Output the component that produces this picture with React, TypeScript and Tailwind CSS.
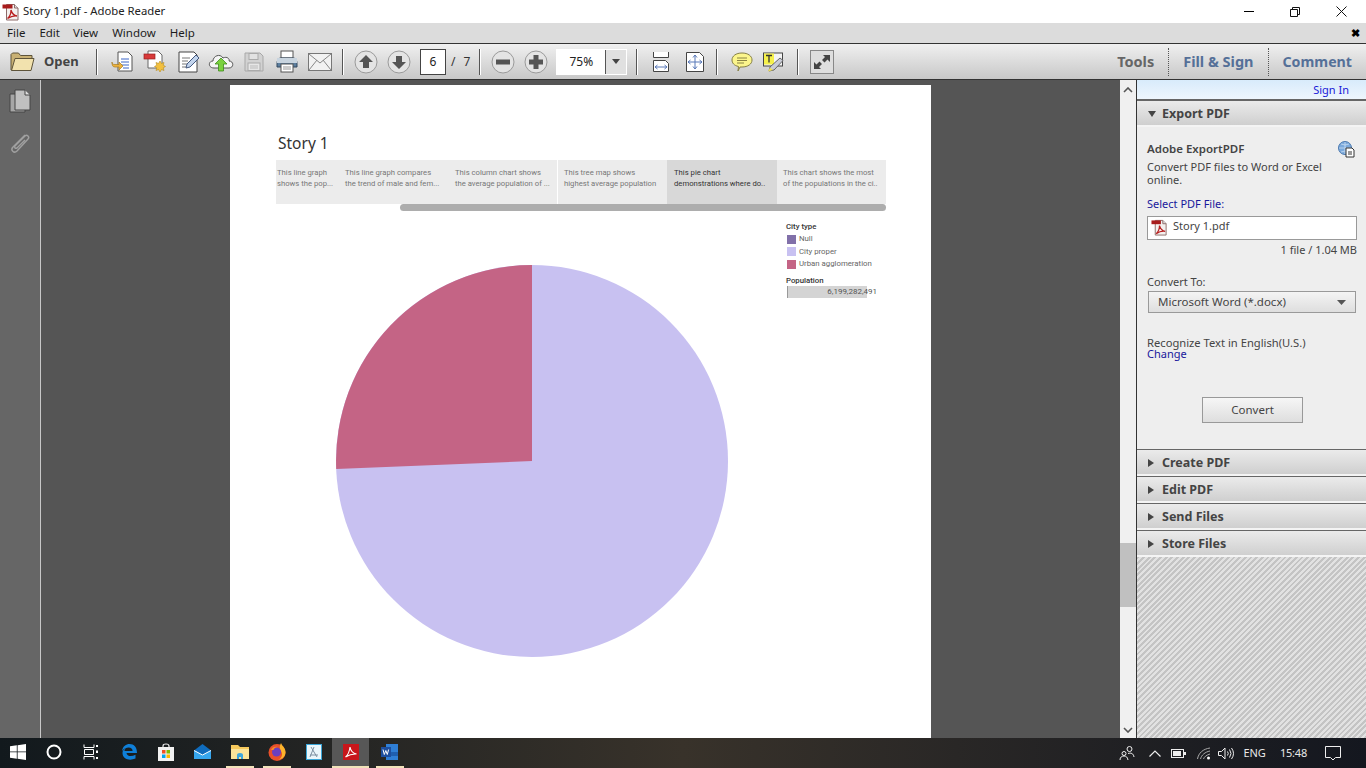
import React from "react";

const ui = "font-['Noto_Sans','Open_Sans',sans-serif]";

function PdfIcon({ size = 18 }: { size?: number }) {
  return (
    <svg width={size} height={size} viewBox="0 0 18 18">
      <path d="M4.5 1.5h8l3.5 3.500v12h-11.500z" fill="#f4f0ee" stroke="#8c6a68" />
      <path d="M12.500 1.500v3.500h3.500" fill="#ddd" stroke="#8c6a68" />
      <rect x="0.500" y="1.500" width="10" height="4" fill="#a81c1c" />
      <path d="M5.500 15.500c2.500-2 3.500-5 3.500-8.500 1 3.500 3 5.500 6 6-3-.5-6.500 .5-9.500 2.500z" fill="none" stroke="#b92020" strokeWidth="1.300" />
    </svg>
  );
}

function Folder() {
  return (
    <svg width="25" height="21" viewBox="0 0 25 21">
      <path d="M1 19V3.500L2.500 2h6l2 2.500H22V8H6L3.500 19z" fill="#c9b174" stroke="#5e543a" />
      <path d="M1.500 19.500 5 7.500h19L21 19.500z" fill="#f2e2ae" stroke="#5e543a" />
    </svg>
  );
}

function TbIcon({ children }: { children: React.ReactNode }) {
  return <div className="w-[33px] h-[35px] flex items-center justify-center shrink-0">{children}</div>;
}

function Sep({ className = "" }: { className?: string }) {
  return <div className={`w-[1px] h-[26px] bg-[#555] border-r border-white box-content shrink-0 ${className}`} />;
}

function RoundBtn({ d }: { d: string }) {
  return (
    <TbIcon>
      <svg width="24" height="24" viewBox="0 0 24 24">
        <circle cx="12" cy="12" r="11" fill="#e4e4e4" stroke="#9a9a9a" />
        <path d={d} fill="#555" />
      </svg>
    </TbIcon>
  );
}

function SectionHeader({ label, open = false }: { label: string; open?: boolean }) {
  return (
    <div className="h-[27px] pt-[2px] border-t border-[#666] border-b-2 border-b-[#f4f4f4] bg-gradient-to-b from-[#ebebeb] to-[#cfcfcf] flex items-center text-[12.5px] font-bold text-[#444] shrink-0">
      <svg width="10" height="10" viewBox="0 0 10 10" className={open ? "ml-[10px]" : "ml-[9px]"}>
        {open ? <path d="M1 2h8L5 8z" fill="#444" /> : <path d="M2 1v8l6-4z" fill="#444" />}
      </svg>
      <span className={open ? "ml-[5px]" : "ml-[6px]"}>{label}</span>
    </div>
  );
}

function PdfTab({ a, b, w, active = false, divider = false, pl = "pl-[7px]" }: { a: string; b: string; w: string; active?: boolean; divider?: boolean; pl?: string }) {
  return (
    <div className={`${w} h-[44px] ${pl} pt-[7px] leading-[11px] text-[7.7px] shrink-0 whitespace-nowrap overflow-hidden ${active ? "bg-[#d8d8d8] text-[#333]" : "bg-[#ececec] text-[#777]"} ${divider ? "border-r border-white" : ""}`}>
      <div>{a}</div>
      <div>{b}</div>
    </div>
  );
}

function LegendRow({ color, label }: { color: string; label: string }) {
  return (
    <div className="flex items-center h-[12.500px] ml-[1px]">
      <div className={`w-[9px] h-[9px] ${color}`} />
      <span className="ml-[3px] text-[7.8px] text-[#666]">{label}</span>
    </div>
  );
}

function TaskIcon({ children, active = false, mark = false, w = "w-[37px]" }: { children: React.ReactNode; active?: boolean; mark?: boolean; w?: string }) {
  return (
    <div className={`${w} h-[30px] flex flex-col items-center shrink-0 ${active ? "bg-[#575757]" : ""}`}>
      <div className="flex-1 flex items-center justify-center">{children}</div>
      <div className={`h-[2px] ${active ? "w-full" : "w-[28px]"} ${mark ? "bg-[#f1e3ba]" : ""}`} />
    </div>
  );
}

export default function App() {
  return (
    <div className={`w-[1366px] h-[768px] flex flex-col overflow-hidden bg-white ${ui}`}>
      {/* title bar */}
      <div className="h-[23px] flex items-center shrink-0 text-[11.3px] text-[#222]">
        <div className="ml-[2px] mt-[1px]"><PdfIcon /></div>
        <span className="ml-[3px]">Story 1.pdf - Adobe Reader</span>
        <div className="ml-auto flex items-center">
          <div className="w-[10px] h-[1px] bg-black mr-[36px]" />
          <svg width="10" height="10" viewBox="0 0 10 10" className="mr-[36px]">
            <path d="M.5 2.500h7v7h-7zM2.500 2.500v-2h7v7h-2" fill="none" stroke="#111" />
          </svg>
          <svg width="11" height="11" viewBox="0 0 11 11" className="mr-[19px]">
            <path d="M.5 .5l10 10M10.500 .5l-10 10" stroke="#111" />
          </svg>
        </div>
      </div>
      {/* menu */}
      <div className="h-[20px] bg-[#dcdcdc] flex items-center text-[11.5px] text-[#1c1c1c] shrink-0 relative">
        <span className="ml-[7px]">File</span>
        <span className="ml-[14px]">Edit</span>
        <span className="ml-[13px]">View</span>
        <span className="ml-[14px]">Window</span>
        <span className="ml-[14px]">Help</span>
        <span className="ml-auto mr-[6px] mb-[1px] text-[11px] font-bold text-black leading-none">✖</span>
      </div>
      {/* toolbar */}
      <div className="h-[37px] border-y border-[#333] bg-gradient-to-b from-[#f0f0f0] to-[#c8c8c8] flex items-center shrink-0 border-x-0">
        <div className="ml-[10px]"><Folder /></div>
        <span className="ml-[9px] text-[13px] font-bold text-[#444] w-[45px]">Open</span>
        <Sep className="ml-[7px]" />
        <div className="ml-[7px] flex">
          <TbIcon>
            <svg width="24" height="24" viewBox="0 0 24 24">
              <path d="M8 2h10l4 4v15H8z" fill="#fff" stroke="#555" />
              <path d="M11 9h8M11 12h8M11 15h8M13 18h6" stroke="#3c66c8" />
              <path d="M9 17H5c-2.500 0-3-2-3-5 0 2 1 2.500 3 2.500h4v-2.500l4 4-4 4z" fill="#eeb23c" stroke="#a87c20" strokeWidth=".7" />
            </svg>
          </TbIcon>
          <TbIcon>
            <svg width="24" height="24" viewBox="0 0 24 24">
              <path d="M5 1h10l4 4v13H5z" fill="#fff" stroke="#666" />
              <rect x="1" y="4" width="11" height="5" fill="#d83a3a" stroke="#922" strokeWidth=".7" />
              <path d="M17 11l1.500 2.500 2.500-1-.8 2.700 2.300 1.300-2.300 1.300.8 2.700-2.500-1L17 22l-1.500-2.500-2.500 1 .8-2.700-2.300-1.300 2.300-1.300-.8-2.700 2.500 1z" fill="#f3c03e" stroke="#b68a1c" strokeWidth=".6" />
            </svg>
          </TbIcon>
          <TbIcon>
            <svg width="24" height="24" viewBox="0 0 24 24">
              <path d="M3 2h15l3 3v17H3z" fill="#fff" stroke="#444" />
              <path d="M6 8h8M6 11h6M6 14h5M6 17h4" stroke="#777" />
              <path d="M10 18l1-4 9-9 3 3-9 9z" fill="#c3d5ee" stroke="#44597f" />
            </svg>
          </TbIcon>
          <TbIcon>
            <svg width="26" height="22" viewBox="0 0 26 22">
              <path d="M6 17c-6 0-6-7-1-7 0-5 7-8 10-3 4-2 7 1 6 3 5 0 5 7 0 7z" fill="#f5f5f5" stroke="#555" />
              <path d="M13 7l6 6h-3.500v7h-5v-7H7z" fill="#7ad13e" stroke="#3f8c1d" strokeWidth=".8" />
            </svg>
          </TbIcon>
          <TbIcon>
            <svg width="20" height="20" viewBox="0 0 20 20">
              <path d="M1 1h15l3 3v15H1z" fill="#d2d2d2" stroke="#a8a8a8" />
              <rect x="5" y="1.500" width="9" height="6" fill="#e2e2e2" stroke="#aaa" />
              <rect x="4" y="11" width="12" height="7.500" fill="#e6e6e6" stroke="#aaa" />
              <path d="M6 14h8M6 16h8" stroke="#bbb" />
            </svg>
          </TbIcon>
          <TbIcon>
            <svg width="24" height="23" viewBox="0 0 24 23">
              <rect x="6" y="1" width="12" height="7" fill="#fff" stroke="#555" />
              <path d="M2 14q0-6 4-6h12q4 0 4 6v3H2z" fill="#5d7f9f" stroke="#33485f" />
              <rect x="2" y="8" width="20" height="5" fill="#c8d4df" />
              <rect x="6" y="14" width="12" height="8" fill="#fff" stroke="#555" />
              <path d="M8 17h8M8 19h8" stroke="#999" />
            </svg>
          </TbIcon>
          <TbIcon>
            <svg width="24" height="18" viewBox="0 0 24 18">
              <rect x=".5" y=".5" width="23" height="17" fill="#f2f2f2" stroke="#777" />
              <path d="M1 1l11 9 11-9M1 17l8-10M23 17l-8-10" fill="none" stroke="#888" />
            </svg>
          </TbIcon>
        </div>
        <Sep className="ml-[6px]" />
        <div className="ml-[5px] flex">
          <RoundBtn d="M12 5l7 7h-4v6H9v-6H5z" />
          <RoundBtn d="M12 19l7-7h-4V6H9v6H5z" />
        </div>
        <div className="ml-[5px] w-[26px] h-[26px] bg-white border border-[#444] flex items-center justify-center text-[12px] text-[#222]">6</div>
        <span className="ml-[5px] text-[12px] text-[#333]">/</span>
        <span className="ml-[8px] text-[12px] text-[#333]">7</span>
        <Sep className="ml-[9px]" />
        <div className="ml-[5px] flex">
          <RoundBtn d="M5 9.500h14v5H5z" />
          <RoundBtn d="M9.500 5h5v4.500H19v5h-4.500V19h-5v-4.500H5v-5h4.500z" />
        </div>
        <div className="ml-[4px] w-[71px] h-[26px] border border-white bg-white flex text-[12px] text-[#222]">
          <div className="w-[48px] flex items-center justify-center">75%</div>
          <div className="flex-1 border-l border-[#555] bg-[#e0e0e0] flex items-center justify-center">
            <svg width="8" height="5" viewBox="0 0 8 5"><path d="M0 0h8L4 5z" fill="#444" /></svg>
          </div>
        </div>
        <Sep className="ml-[9px]" />
        <div className="ml-[7px] flex">
          <TbIcon>
            <svg width="18" height="20" viewBox="0 0 18 20">
              <path d="M.5 0v5.500h15V0" fill="#fff" stroke="#444" />
              <path d="M.5 8.500h12l3 3v8H.5z" fill="#fff" stroke="#444" />
              <path d="M2 15h12M2 15l2.500-2M2 15l2.500 2M14 15l-2.500-2M14 15l-2.500 2" stroke="#5878b8" fill="none" />
            </svg>
          </TbIcon>
          <TbIcon>
            <svg width="18" height="20" viewBox="0 0 18 20">
              <path d="M.5 .5h13l4 4v15H.5z" fill="#fff" stroke="#444" />
              <path d="M9 3v14M2 10h14M9 3L7 5.500M9 3l2 2.500M9 17l-2-2.500M9 17l2-2.500M2 10l2.500-2M2 10l2.500 2M16 10l-2.500-2M16 10l-2.500 2" stroke="#5878b8" fill="none" />
            </svg>
          </TbIcon>
        </div>
        <Sep className="ml-[5px]" />
        <div className="ml-[7px] flex">
          <TbIcon>
            <svg width="22" height="20" viewBox="0 0 22 20">
              <path d="M11 1c6 0 10 3 10 7s-4 7-10 7H9l-2 4 .5-4.500C3 13.500 1 11 1 8c0-4 4-7 10-7z" fill="#fbf58c" stroke="#857f44" />
              <path d="M6 6h10M6 8.500h10M6 11h7" stroke="#8a8444" />
            </svg>
          </TbIcon>
          <div className="ml-[-1px]">
            <TbIcon>
              <svg width="22" height="20" viewBox="0 0 22 20">
                <rect x=".5" y="1" width="19" height="13" fill="#f4f4f4" stroke="#444" />
                <rect x="1" y="1.500" width="10" height="11" fill="#f5f04a" />
                <path d="M3 3.500h6M6 3.500v7" stroke="#333" strokeWidth="1.300" />
                <path d="M6 19l1-4 10-9 3 2.500L11 18z" fill="#c9ccd6" stroke="#666" />
                <path d="M5 19.500l2-4 3 2.500z" fill="#f0e05a" />
              </svg>
            </TbIcon>
          </div>
        </div>
        <Sep className="ml-[7px]" />
        <div className="ml-[11px] w-[24px] h-[24px] border border-[#888] bg-[#dedede] flex items-center justify-center">
          <svg width="20" height="20" viewBox="0 0 20 20">
            <path d="M11 3h7v7l-2.500-2.500-3 3-2.500-2.500 3-3zM9 17H2v-7l2.500 2.500 3-3L10 12l-3 3z" fill="#444" />
          </svg>
        </div>
        <div className="ml-auto flex items-center h-full text-[14.5px] font-bold">
          <span className="text-[#666]">Tools</span>
          <div className="ml-[14px] h-[28px] border-l border-dotted border-[#555]" />
          <span className="ml-[14px] text-[#557098]">Fill &amp; Sign</span>
          <div className="ml-[14px] h-[28px] border-l border-dotted border-[#555]" />
          <span className="ml-[14px] mr-[14px] text-[14.2px] text-[#557098]">Comment</span>
        </div>
      </div>

      {/* body */}
      <div className="flex-1 flex min-h-0 bg-[#555]">
        <div className="w-[40px] bg-[#666] border-r-0 shrink-0 flex flex-col items-center pt-[9px]">
          <svg width="22" height="25" viewBox="0 0 22 25">
            <path d="M1 5h15v18H1z" fill="#a6a6a6" stroke="#444" />
            <path d="M6 1h10l5 5v15H6z" fill="#c0c0c0" stroke="#444" />
            <path d="M16 1v5h5" fill="#e0e0e0" stroke="#444" />
          </svg>
          <svg width="22" height="24" viewBox="0 0 22 24" className="mt-[18px]">
            <path d="M16 3 4 15c-3 3 1 7 4 4L19 7c2-2-1-5-3-3L6 14c-1 1 0 3 2 2l8-8" fill="none" stroke="#a0a0a0" strokeWidth="1.400" />
          </svg>
        </div>
        <div className="w-[1px] bg-[#c8c8c8] shrink-0" />
        <div className="flex-1 overflow-hidden pl-[189px] pt-[5px]">
          {/* pdf page */}
          <div className="w-[701px] h-[700px] bg-white pl-[46px] pt-[47px]">
            <div className="text-[15.5px] text-[#333] leading-[22px] ml-[2px]">Story 1</div>
            <div className="flex mt-[6px] w-[610px] font-['Roboto',sans-serif]">
              <PdfTab a="This  line graph" b="shows the pop..." w="w-[62px]" pl="pl-[1px]" />
              <PdfTab a="This line graph compares" b="the trend of male and fem..." w="w-[110px]" />
              <PdfTab a="This column chart shows" b="the average population of ..." w="w-[110px]" divider />
              <PdfTab a="This tree map shows" b="highest average population" w="w-[109px]" pl="pl-[6px]" />
              <PdfTab a="This pie chart" b="demonstrations where do.." w="w-[110px]" active />
              <PdfTab a="This chart shows the most" b="of the populations in the ci.." w="w-[109px]" pl="pl-[6px]" />
            </div>
            <div className="h-[7px] w-[610px] pl-[124px]">
              <div className="h-full bg-[#adadad] rounded-full" />
            </div>
            <div className="flex">
              <svg width="392" height="392" viewBox="0 0 392 392" className="ml-[60px] mt-[54px] shrink-0">
                <circle cx="196" cy="196" r="196" fill="#c8c1f1" />
                <path d="M196 196 L.2 204 A196 196 0 0 1 196 0z" fill="#c46485" />
              </svg>
              <div className="ml-[58px] mt-[11px] font-['Roboto',sans-serif]">
                <div className="text-[7.8px] font-medium text-[#333] leading-[10px] mb-[1px]">City type</div>
                <LegendRow color="bg-[#8170a9]" label="Null" />
                <LegendRow color="bg-[#c8c1f1]" label="City proper" />
                <LegendRow color="bg-[#c46485]" label="Urban agglomeration" />
                <div className="text-[7.8px] font-medium text-[#333] leading-[11px] mt-[4px]">Population</div>
                <div className="w-[80px] ml-[1px] h-[12px] bg-[#d4d4d4] border-l border-[#999] text-[8px] text-[#555] leading-[12px] text-right whitespace-nowrap">
                  <span className="mr-[-10px]">6,199,282,491</span>
                </div>
              </div>
            </div>
          </div>
        </div>
        {/* scrollbar */}
        <div className="w-[16px] bg-[#f0f0f0] flex flex-col items-center shrink-0">
          <svg width="10" height="6" viewBox="0 0 10 6" className="mt-[7px]"><path d="M1 5l4-4 4 4" fill="none" stroke="#555" strokeWidth="1.600" /></svg>
          <div className="w-full h-[64px] bg-[#c0c0c0] mt-[450px]" />
          <svg width="10" height="6" viewBox="0 0 10 6" className="mt-auto mb-[5px]"><path d="M1 1l4 4 4-4" fill="none" stroke="#555" strokeWidth="1.600" /></svg>
        </div>
        {/* right panel */}
        <div className="w-[230px] shrink-0 border-l border-[#333] bg-[#eeeeee] flex flex-col text-[11px] text-[#444]">
          <div className="h-[20px] bg-gradient-to-b from-[#d8ebfb] to-[#eef6fd] border-b border-[#666] text-right pr-[17px] text-[11px] leading-[19px] text-[#1818d8] shrink-0">Sign In</div>
          <div className="h-[28px] flex flex-col shrink-0">
            <SectionHeader label="Export PDF" open />
          </div>
          <div className="h-[321px] pl-[10px] pr-[9px] pt-[13px] shrink-0 relative">
            <div className="text-[11.5px] font-semibold leading-[16px] text-[#444]">Adobe ExportPDF</div>
            <svg width="17" height="17" viewBox="0 0 17 17" className="absolute right-[11px] top-[13px]">
              <circle cx="7" cy="7" r="6.500" fill="#7ba9dc" stroke="#4a78ae" />
              <path d="M1 7h12M7 1v12M3 3q4 2 8 0M3 11q4-2 8 0" stroke="#d3e4f5" fill="none" strokeWidth=".7" />
              <path d="M8 7h6l2 2v7H8z" fill="#fff" stroke="#333" />
              <path d="M10 11h4M10 13h4" stroke="#333" />
            </svg>
            <div className="mt-[3px] leading-[13px]">Convert PDF files to Word or Excel<br />online.</div>
            <div className="mt-[10px] leading-[16px] text-[#18189c]">Select PDF File:</div>
            <div className="mt-[4px] h-[24px] bg-white border border-[#999] flex items-start">
              <div className="ml-[3px] mt-[2px]"><PdfIcon size={17} /></div>
              <span className="ml-[5px] leading-[17px]">Story 1.pdf</span>
            </div>
            <div className="mt-[2px] text-right leading-[15px]">1 file / 1.04 MB</div>
            <div className="mt-[17px] leading-[16px]">Convert To:</div>
            <div className="mt-[1px] w-[208px] ml-[1px] h-[22px] border border-[#999] bg-gradient-to-b from-[#f4f4f4] to-[#dedede] flex items-center pl-[9px] pr-[9px] text-[11.5px]">
              <span>Microsoft Word (*.docx)</span>
              <svg width="9" height="5" viewBox="0 0 9 5" className="ml-auto"><path d="M0 0h9L4.500 5z" fill="#555" /></svg>
            </div>
            <div className="mt-[24px] leading-[11px] text-[11.2px]">Recognize Text in English(U.S.)</div>
            <div className="leading-[11px] text-[#18189c]">Change</div>
            <div className="mt-[38px] ml-[55px] w-[101px] h-[26px] border border-[#999] bg-gradient-to-b from-[#f6f6f6] to-[#dedede] flex items-center justify-center text-[11.5px]">Convert</div>
          </div>
          <SectionHeader label="Create PDF" />
          <SectionHeader label="Edit PDF" />
          <SectionHeader label="Send Files" />
          <SectionHeader label="Store Files" />
          <div className="flex-1 bg-[repeating-linear-gradient(135deg,#c4c4c4_0,#c4c4c4_2px,#e2e2e2_2px,#e2e2e2_4px)]" />
        </div>
      </div>

      {/* taskbar */}
      <div className="h-[30px] shrink-0 flex items-center bg-gradient-to-r from-[#12191d] via-[#38322a] to-[#14171f]">
        <TaskIcon w="w-[36px]">
          <svg width="16" height="16" viewBox="0 0 16 16"><path d="M0 2.300l6.800-1V7.500H0zM7.600 1.200 16 0v7.500H7.600zM0 8.300h6.800v6.400l-6.800-1zM7.600 8.300H16V16l-8.400-1.200z" fill="#fff" /></svg>
        </TaskIcon>
        <TaskIcon w="w-[36px]">
          <svg width="16" height="16" viewBox="0 0 16 16"><circle cx="8" cy="8" r="6.500" fill="none" stroke="#fff" strokeWidth="2" /></svg>
        </TaskIcon>
        <TaskIcon w="w-[38px]">
          <svg width="16" height="16" viewBox="0 0 16 16"><path d="M1 .5v3h10v-3M1 15.500v-3h10v3M1.500 5.500h9v5h-9z" fill="none" stroke="#fff" /><path d="M14 1v2M14 6.500v2.500M14 13v2" stroke="#fff" strokeWidth="2" /></svg>
        </TaskIcon>
        <TaskIcon>
          <svg width="16" height="16" viewBox="0 0 16 16"><path d="M1 7C2 2 5 0 8.500 0 13 0 16 3 16 9H5.500c.3 3.500 5 4 9 1.800v3.700C9 17 1.500 15.500 1.500 9c0-2 1-3.500 3.500-5-1 1-1.500 2-1.600 3h8.200c0-4-6-5-10.600 0z" fill="#0f7fd8" /></svg>
        </TaskIcon>
        <TaskIcon>
          <svg width="16" height="18" viewBox="0 0 16 18">
            <path d="M5 5V3q0-2 3-2t3 2v2" fill="none" stroke="#eee" strokeWidth="1.200" />
            <rect y="4" width="16" height="14" fill="#f2f2f2" />
            <rect x="4" y="7" width="3.500" height="3.500" fill="#f25022" /><rect x="8.500" y="7" width="3.500" height="3.500" fill="#7fba00" />
            <rect x="4" y="11.500" width="3.500" height="3.500" fill="#00a4ef" /><rect x="8.500" y="11.500" width="3.500" height="3.500" fill="#ffb900" />
          </svg>
        </TaskIcon>
        <TaskIcon>
          <svg width="17" height="17" viewBox="0 0 17 17"><path d="M0 6.500 8.500 0 17 6.500V15H0z" fill="#0f6cbd" /><path d="M0 6.500 8.500 11 17 6.500V15H0z" fill="#36a6ee" /><path d="M0 6.500 8.500 11 17 6.500" fill="none" stroke="#fff" /></svg>
        </TaskIcon>
        <TaskIcon mark>
          <svg width="18" height="16" viewBox="0 0 18 16"><path d="M0 1h7l2 2h9v12H0z" fill="#f6c95c" /><rect y="5" width="18" height="10" fill="#fbe49a" /><path d="M6 15v-4q0-2 3-2t3 2v4h-2v-2H8v2z" fill="#3fa7dc" /></svg>
        </TaskIcon>
        <TaskIcon mark>
          <svg width="18" height="18" viewBox="0 0 18 18">
            <circle cx="9" cy="9.500" r="8.500" fill="#e8502a" />
            <path d="M13 0c1 3 5 5 4.500 10C17 14 14 16 10 17c4-2 5-6 3-9-1-2-2-4 0-8z" fill="#fcb42c" />
            <circle cx="8.500" cy="9" r="4.500" fill="#6a3fc0" />
            <path d="M3 7c1-3 4-4 7-3-2 0-4 1-4.500 3z" fill="#f98a2a" />
          </svg>
        </TaskIcon>
        <TaskIcon>
          <svg width="16" height="16" viewBox="0 0 16 16"><rect x=".5" y=".5" width="15" height="15" fill="#eaf6fb" stroke="#3aa6d8" /><path d="M5 3l6 10M8 3 4 13M4 11h8" stroke="#7c8fa0" fill="none" /></svg>
        </TaskIcon>
        <TaskIcon active mark>
          <svg width="16" height="16" viewBox="0 0 16 16"><rect width="16" height="16" fill="#c8161b" /><path d="M2.500 13c2.500-2 4-5.500 4.500-10 .5 3.500 2.500 6 6.500 7-3-.2-7.500.8-11 3z" fill="none" stroke="#fff" strokeWidth="1.100" /></svg>
        </TaskIcon>
        <TaskIcon mark w="w-[41px]">
          <svg width="17" height="16" viewBox="0 0 17 16"><rect x="5" width="12" height="16" fill="#2f7fd6" /><rect x="5" y="8" width="12" height="4" fill="#1f5fb0" /><rect y="3" width="10" height="10" fill="#1e4f9e" /><path d="M2 5.500l1.300 5 1.500-4 1.500 4 1.300-5" fill="none" stroke="#fff" /></svg>
        </TaskIcon>
        <div className="ml-auto flex items-center text-[#e8e8e8] text-[11px]">
          <svg width="16" height="16" viewBox="0 0 16 16" className="mr-[14px]"><g fill="none" stroke="#eee"><circle cx="10.500" cy="4" r="2.500" /><circle cx="5" cy="8.500" r="2" /><path d="M1 15c0-3 2-4 4-4s3.500 1 4 4M9 8.500c3-1 5.500 0 6 3.500" /></g></svg>
          <svg width="12" height="7" viewBox="0 0 12 7" className="mr-[10px]"><path d="M.5 6.500 6 1l5.500 5.500" fill="none" stroke="#eee" strokeWidth="1.200" /></svg>
          <svg width="15" height="9" viewBox="0 0 15 9" className="mr-[11px]"><rect x=".5" y=".5" width="12" height="8" fill="none" stroke="#eee" /><rect x="2" y="2" width="8" height="5" fill="#eee" /><rect x="13" y="3" width="2" height="3" fill="#eee" /></svg>
          <svg width="14" height="13" viewBox="0 0 14 13" className="mr-[7px]"><path d="M.5 12C1.500 6 6 2 13 1M3.500 12C4.500 8 8 5 13 4M6.500 12C7 10 9.500 8 13 7" fill="none" stroke="#aaa" /><circle cx="11.500" cy="11" r="1.500" fill="#fff" /></svg>
          <svg width="16" height="13" viewBox="0 0 16 13" className="mr-[9px]"><path d="M.5 4.500h3L7 1v11L3.500 8.500h-3z M9.500 4.500q1.500 2 0 4M11.500 2.500q3 4 0 8M13.500 1q4 5.500 0 11" fill="none" stroke="#eee" /></svg>
          <span className="mr-[14px]">ENG</span>
          <span className="mr-[18px] tracking-[-0.2px]">15:48</span>
          <svg width="16" height="15" viewBox="0 0 16 15" className="mr-[25px]"><path d="M.5 .5h15v11h-5L8 14l-2.500-2.500h-5z" fill="none" stroke="#eee" /></svg>
        </div>
      </div>
    </div>
  );
}
